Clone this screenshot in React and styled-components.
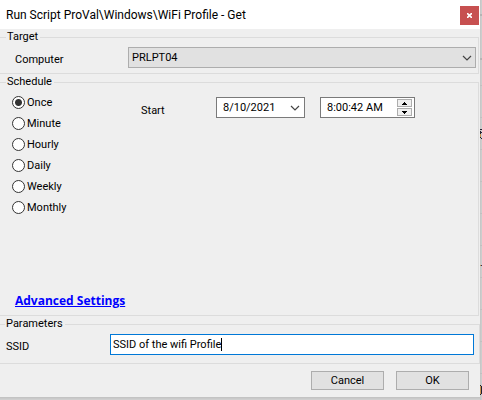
import React, { useState } from "react";
import styled, { createGlobalStyle } from "styled-components";

const Global = createGlobalStyle`
  * { box-sizing: border-box; }
  html, body, #root { height: 100%; }
  body {
    margin: 0;
    overflow: hidden;
    background: #cdcdcd;
    color: #000;
    font: 11px/14px Roboto, Tahoma, sans-serif;
  }
  button, input, select { font: inherit; color: inherit; }
`;

const Desktop = styled.div`
  display: grid;
  grid-template-columns: minmax(0, 1fr) 2px;
  grid-template-rows: minmax(0, 1fr) 3px;
  height: 100%;
`;

const Dialog = styled.form`
  display: flex;
  flex-direction: column;
  background: #efefef;
`;

const Backdrop = styled.div`
  grid-row: 1 / 3;
  grid-column: 2;
  overflow: hidden;
  background: linear-gradient(to right, #c4c4c4, #d0d0d0);
  > svg { display: block; }
`;

const BottomShade = styled.div`
  grid-row: 2;
  grid-column: 1;
  background: linear-gradient(#c0c0c0, #d2d2d2);
`;

const TitleBar = styled.header`
  display: flex;
  align-items: center;
  justify-content: space-between;
  height: 29px;
  padding-left: 6px;
  background: #fff;
`;

const Title = styled.h1`
  margin: 0;
  font: 12px/16px Roboto, "Segoe UI", sans-serif;
`;

const CloseButton = styled.button`
  display: flex;
  align-items: center;
  justify-content: center;
  width: 19px;
  height: 19px;
  margin: 2px 1px 0 0;
  padding: 0;
  border: 0;
  background: #c75050;
`;

const Group = styled.fieldset`
  flex: ${(p) => (p.$grow ? "1" : "none")};
  display: flex;
  min-width: 0;
  margin: 1px ${(p) => (p.$flush ? "0" : "1px")} 0 0;
  padding: 0;
  border: 1px solid #dcdcdc;
  border-left: 0;
`;

const Legend = styled.legend`
  margin-left: ${(p) => p.$inset || "6px"};
  padding: 0 2px 0 1px;
`;

const FieldRow = styled.div`
  display: grid;
  grid-template-columns: ${(p) => p.$label} minmax(0, 1fr);
  align-items: center;
  flex: 1;
  padding: ${(p) => p.$pad};
`;

const FieldLabel = styled.label`
  padding-top: 4px;
`;

const SelectBox = styled.div`
  display: grid;
  align-items: center;
  > * { grid-area: 1 / 1; }
  > svg { justify-self: end; margin-right: 4px; pointer-events: none; }
`;

const Select = styled.select`
  appearance: none;
  width: 100%;
  height: 21px;
  padding: 0 20px 0 3px;
  border: 1px solid #adadad;
  border-radius: 0;
  background: #e1e1e1;
`;

const ScheduleBody = styled.div`
  flex: 1;
  display: flex;
  flex-direction: column;
  justify-content: space-between;
  padding: 3px 0 7px 12px;
`;

const ScheduleTop = styled.div`
  display: grid;
  grid-template-columns: 129px 75px 104px auto;
  align-items: start;
`;

const RadioLabel = styled.label`
  display: flex;
  align-items: center;
  gap: 2px;
  height: 21px;
`;

const Radio = styled.input`
  appearance: none;
  width: 13px;
  height: 13px;
  margin: 0;
  border: 1px solid #333;
  border-radius: 50%;
  background: #fff;
  &:checked { background: radial-gradient(circle, #333 3px, #fff 4px); }
`;

const StartLabel = styled.label`
  margin-top: 12px;
`;

const DateField = styled.div`
  display: flex;
  align-items: center;
  width: ${(p) => p.$width};
  height: 21px;
  margin-top: 5px;
  padding-left: 6px;
  border: 1px solid #7a7a7a;
  background: #fff;
`;

const BareInput = styled.input`
  flex: 1;
  min-width: 0;
  padding: 0;
  border: 0;
  outline: 0;
  background: transparent;
`;

const DropButton = styled.button`
  display: flex;
  padding: 0 4px;
  border: 0;
  background: transparent;
`;

const Spinner = styled.div`
  display: flex;
  flex-direction: column;
  gap: 1px;
  margin-right: 2px;
`;

const SpinButton = styled.button`
  display: flex;
  align-items: center;
  justify-content: center;
  width: 15px;
  height: 8px;
  padding: 0;
  border: 1px solid #adadad;
  background: #f0f0f0;
`;

const AdvancedLink = styled.a`
  align-self: flex-start;
  margin-left: 3px;
  color: #00f;
  font: bold 12px/14px "Open Sans", Tahoma, sans-serif;
`;

const ActiveField = styled.div`
  display: flex;
  align-items: center;
  height: 21px;
  padding-left: 2px;
  border: 1px solid #0078d7;
  background: #fff;
`;

const ContentInput = styled(BareInput)`
  flex: none;
  field-sizing: content;
  max-width: 100%;
  caret-color: transparent;
`;

const Caret = styled.span`
  width: 1px;
  height: 13px;
  background: #000;
`;

const Actions = styled.footer`
  display: flex;
  justify-content: flex-end;
  gap: 12px;
  padding: 7px 11px;
`;

const ActionButton = styled.button`
  width: 73px;
  height: 19px;
  padding: 0;
  border: 1px solid #adadad;
  background: #e1e1e1;
  line-height: 14px;
`;

const Chevron = () => (
  <svg width="10" height="6" viewBox="0 0 10 6" fill="none" stroke="#444" strokeWidth="1.2" aria-hidden="true">
    <path d="M1 1 5 5 9 1" />
  </svg>
);

const Arrow = ({ down }) => (
  <svg width="5" height="3" viewBox="0 0 5 3" aria-hidden="true" shapeRendering="crispEdges">
    <path d={down ? "M0 0h5v1H4v1H3v1H2V2H1V1H0z" : "M2 0h1v1h1v1h1v1H0V2h1V1h1z"} />
  </svg>
);

const WindowBehind = () => (
  <svg width="2" height="400" viewBox="0 0 2 400" aria-hidden="true" shapeRendering="crispEdges">
    <path fill="#b4b4b4" d="M0 14h2v2H0zM0 58h2v2H0z" />
    <path fill="#c0c0c0" d="M0 85h2v1H0zM0 117h2v1H0zM0 149h2v1H0zM0 181h2v1H0zM0 213h2v1H0zM0 245h2v1H0zM0 277h2v1H0zM0 309h2v1H0zM0 341h2v1H0zM0 373h2v1H0z" />
    <path fill="#223" d="M0 129h2v1H0zM0 131h1v7H0zM1 132h1v1H1zM1 138h1v1H1zM1 386h1v8H1zM0 385h1v1H0zM0 394h1v1H0z" />
    <path fill="#c8924e" d="M0 134h1v3H0zM0 265h1v1H0zM0 386h1v8H0z" />
    <path fill="#335" d="M1 265h1v1H1z" />
  </svg>
);

const FREQUENCIES = ["Once", "Minute", "Hourly", "Daily", "Weekly", "Monthly"];

export default function App() {
  const [frequency, setFrequency] = useState("Once");
  const [ssid, setSsid] = useState("SSID of the wifi Profile");
  return (
    <>
      <Global />
      <Desktop>
        <Dialog onSubmit={(e) => e.preventDefault()}>
          <TitleBar>
            <Title>Run Script ProVal\Windows\WiFi Profile - Get</Title>
            <CloseButton type="button" aria-label="Close">
              <svg width="5" height="5" viewBox="0 0 5 5" stroke="#fff" strokeWidth="1.6" aria-hidden="true">
                <path d="M0 0 5 5M5 0 0 5" />
              </svg>
            </CloseButton>
          </TitleBar>
          <Group>
            <Legend>Target</Legend>
            <FieldRow $label="113px" $pad="3px 2px 5px 15px">
              <FieldLabel htmlFor="computer">Computer</FieldLabel>
              <SelectBox>
                <Select id="computer">
                  <option>PRLPT04</option>
                </Select>
                <Chevron />
              </SelectBox>
            </FieldRow>
          </Group>
          <Group $grow>
            <Legend>Schedule</Legend>
            <ScheduleBody>
              <ScheduleTop>
                <div role="radiogroup" aria-label="Schedule">
                  {FREQUENCIES.map((name) => (
                    <RadioLabel key={name}>
                      <Radio
                        type="radio"
                        name="frequency"
                        checked={frequency === name}
                        onChange={() => setFrequency(name)}
                      />
                      {name}
                    </RadioLabel>
                  ))}
                </div>
                <StartLabel htmlFor="start-date">Start</StartLabel>
                <DateField $width="89px">
                  <BareInput id="start-date" defaultValue="8/10/2021" />
                  <DropButton type="button" aria-label="Choose date">
                    <Chevron />
                  </DropButton>
                </DateField>
                <DateField $width="95px">
                  <BareInput aria-label="Start time" defaultValue="8:00:42 AM" />
                  <Spinner>
                    <SpinButton type="button" aria-label="Later"><Arrow /></SpinButton>
                    <SpinButton type="button" aria-label="Earlier"><Arrow down /></SpinButton>
                  </Spinner>
                </DateField>
              </ScheduleTop>
              <AdvancedLink href="#advanced">Advanced Settings</AdvancedLink>
            </ScheduleBody>
          </Group>
          <Group $flush>
            <Legend $inset="5px">Parameters</Legend>
            <FieldRow $label="104px" $pad="3px 5px 8px 6px">
              <FieldLabel htmlFor="ssid">SSID</FieldLabel>
              <ActiveField>
                <ContentInput id="ssid" value={ssid} onChange={(e) => setSsid(e.target.value)} />
                <Caret />
              </ActiveField>
            </FieldRow>
          </Group>
          <Actions>
            <ActionButton type="button">Cancel</ActionButton>
            <ActionButton type="submit">OK</ActionButton>
          </Actions>
        </Dialog>
        <Backdrop><WindowBehind /></Backdrop>
        <BottomShade />
      </Desktop>
    </>
  );
}
